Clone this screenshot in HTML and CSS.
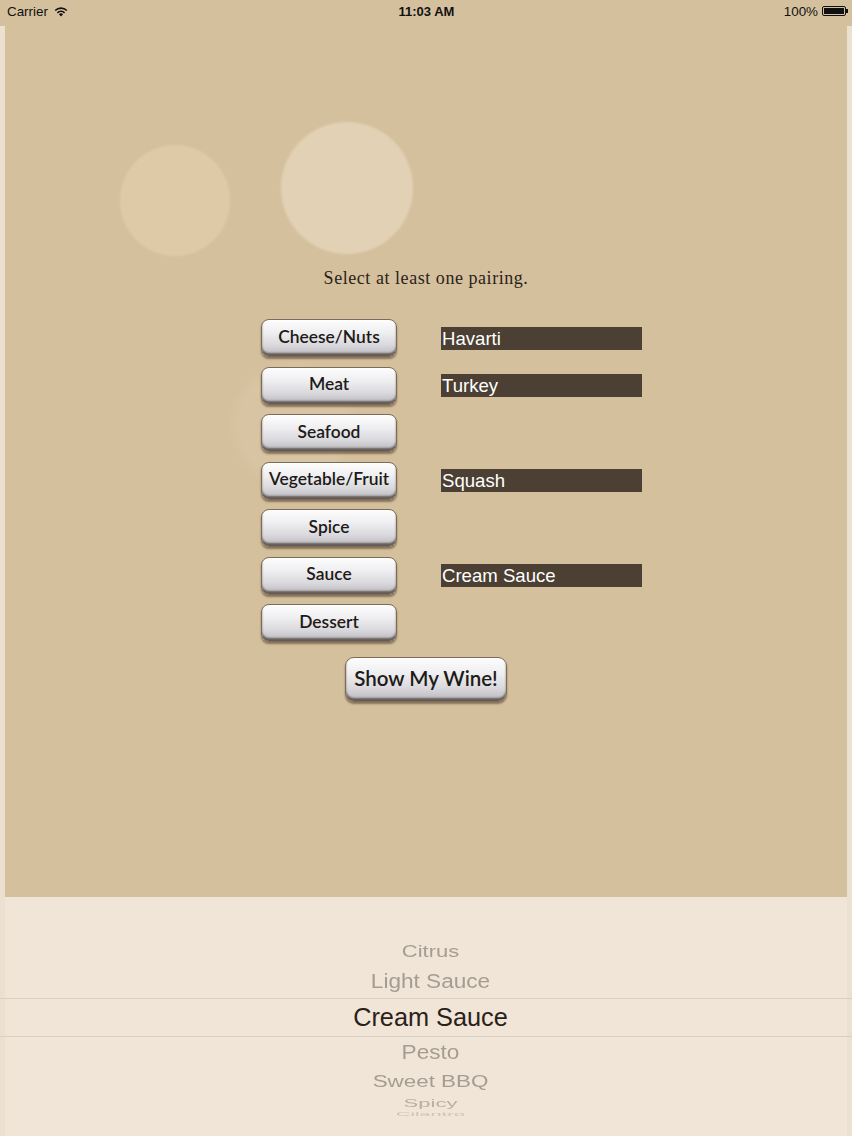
FILE: index.html
```html
<!DOCTYPE html>
<html lang="en">
<head>
<meta charset="utf-8">
<title>Wine Pairing</title>
<link rel="stylesheet" href="styles.css">
</head>
<body>
  <header class="status">
    <div class="status-left">
      <span>Carrier</span>
      <svg class="wifi" width="14" height="11" viewBox="0 0 14 11">
        <path d="M7 10.5 L4.9 8.3 A3 3 0 0 1 9.1 8.3 Z" fill="#111"/>
        <path d="M3.4 6.8 A5.2 5.2 0 0 1 10.6 6.8" fill="none" stroke="#111" stroke-width="1.6"/>
        <path d="M1.2 4.5 A8.3 8.3 0 0 1 12.8 4.5" fill="none" stroke="#111" stroke-width="1.6"/>
      </svg>
    </div>
    <div class="status-time">11:03 AM</div>
    <div class="status-right">
      <span>100%</span>
      <span class="battery"><span class="battery-fill"></span></span>
    </div>
  </header>

  <main class="stage">
    <span class="bubble bubble-a"></span>
    <span class="bubble bubble-b"></span>
    <span class="bubble bubble-c"></span>

    <p class="prompt">Select at least one pairing.</p>

    <div class="pairings">
      <button class="pill">Cheese/Nuts</button>
      <div class="field">Havarti</div>

      <button class="pill">Meat</button>
      <div class="field">Turkey</div>

      <button class="pill">Seafood</button>
      <div></div>

      <button class="pill">Vegetable/Fruit</button>
      <div class="field">Squash</div>

      <button class="pill">Spice</button>
      <div></div>

      <button class="pill">Sauce</button>
      <div class="field">Cream Sauce</div>

      <button class="pill">Dessert</button>
      <div></div>
    </div>

    <div class="submit-row">
      <button class="pill pill-big">Show My Wine!</button>
    </div>
  </main>

  <section class="picker">
    <div class="wheel">
      <div class="row r-far">Citrus</div>
      <div class="row r-near">Light Sauce</div>
      <div class="row r-sel">Cream Sauce</div>
      <div class="row r-near">Pesto</div>
      <div class="row r-far2">Sweet BBQ</div>
      <div class="row r-edge">Spicy</div>
      <div class="row r-edge2">Cilantro</div>
    </div>
  </section>
</body>
</html>
```

FILE: styles.css
```css
html, body {
  margin: 0;
  padding: 0;
}

body {
  width: 852px;
  height: 1136px;
  overflow: hidden;
  background: #ece1d1;
  font-family: "Liberation Sans", Arial, sans-serif;
}

/* status bar */
.status {
  height: 26px;
  background: #d5c09e;
  display: flex;
  align-items: center;
  justify-content: space-between;
  padding: 0 6px 4px 7px;
  box-sizing: border-box;
  font-size: 13.4px;
  color: #111;
}

.status-left,
.status-right {
  display: flex;
  align-items: center;
  width: 120px;
}

.status-left { gap: 6px; }

.status-right {
  justify-content: flex-end;
  gap: 4px;
}

.status-time {
  font-weight: 700;
  font-size: 13px;
}

.battery {
  position: relative;
  width: 24px;
  height: 10px;
  border: 1px solid #111;
  border-radius: 2px;
  padding: 1px;
  box-sizing: border-box;
  display: flex;
}

.battery::after {
  content: "";
  position: absolute;
  right: -3px;
  top: 2px;
  width: 2px;
  height: 4px;
  background: #111;
}

.battery-fill {
  flex: 1;
  background: #111;
}

/* main tan area */
.stage {
  position: relative;
  height: 871px;
  margin: 0 5px;
  background: #d5c09e;
  padding-top: 241px;
  box-sizing: border-box;
}

.bubble {
  position: absolute;
  border-radius: 50%;
  filter: blur(1px);
}

.bubble-a {
  left: 115px;
  top: 119px;
  width: 110px;
  height: 111px;
  background: #dfcaa8;
}

.bubble-b {
  left: 276px;
  top: 96px;
  width: 132px;
  height: 132px;
  background: #e2d1b4;
}

.bubble-c {
  left: 228px;
  top: 338px;
  width: 120px;
  height: 120px;
  background: #d8c4a2;
  filter: blur(4px);
}

.prompt {
  position: relative;
  margin: 0;
  text-align: center;
  font-family: "Liberation Serif", "Times New Roman", serif;
  font-size: 18px;
  letter-spacing: 0.55px;
  line-height: 22px;
  color: #2a2218;
}

.pairings {
  position: relative;
  display: grid;
  grid-template-columns: 136px 201px;
  grid-auto-rows: 38px;
  column-gap: 44px;
  row-gap: 9.5px;
  margin: 30px 0 0 256px;
  align-items: center;
}

.pill {
  height: 38px;
  margin: 0;
  padding: 0 2px 4px;
  border: 1px solid #7d6b57;
  border-radius: 8px;
  background: linear-gradient(#fdfdfd 0%, #efeff1 35%, #d9d8dc 70%, #b9b7bd 100%);
  box-shadow:
    inset 0 -3px 2px rgba(40, 28, 18, 0.6),
    inset 0 1px 1px rgba(255, 255, 255, 0.9),
    0 2px 2px rgba(70, 52, 32, 0.55);
  font-family: Lato, "Noto Sans", sans-serif;
  font-size: 17.4px;
  font-weight: 600;
  color: #1d1a17;
  text-align: center;
  white-space: nowrap;
}

.field {
  height: 23px;
  background: #4b4033;
  color: #fff;
  font-size: 18.6px;
  line-height: 24px;
  padding-left: 1px;
  white-space: nowrap;
}

.submit-row {
  position: relative;
  display: flex;
  justify-content: center;
  margin-top: 15px;
}

.pill.pill-big {
  width: 162px;
  height: 45px;
  font-size: 20.5px;
  border-radius: 9px;
}

/* value picker */
.picker {
  height: 239px;
  margin: 0 5px;
  background: #f0e5d7;
}

.wheel {
  padding-top: 41px;
  display: flex;
  flex-direction: column;
  align-items: center;
}

.row {
  display: flex;
  align-items: center;
  justify-content: center;
  padding-left: 9px;
  color: #a59d94;
  white-space: nowrap;
  align-self: stretch;
}

.r-far {
  height: 28px;
  font-size: 22px;
  transform: scaleY(0.72);
}

.r-near {
  height: 32px;
  font-size: 22.6px;
  transform: scaleY(0.9);
}

.r-sel {
  height: 37px;
  margin: 0 -5px;
  border-top: 1px solid #d9d0c4;
  border-bottom: 1px solid #d9d0c4;
  font-size: 25.3px;
  color: #29221a;
}

.r-far2 {
  height: 26px;
  font-size: 22.4px;
  transform: scaleY(0.74);
}

.r-edge {
  height: 16px;
  font-size: 22px;
  color: #b7afa5;
  transform: scaleY(0.5);
}

.r-edge2 {
  height: 6px;
  font-size: 20px;
  color: #cdc4b9;
  transform: scaleY(0.25);
}
```
